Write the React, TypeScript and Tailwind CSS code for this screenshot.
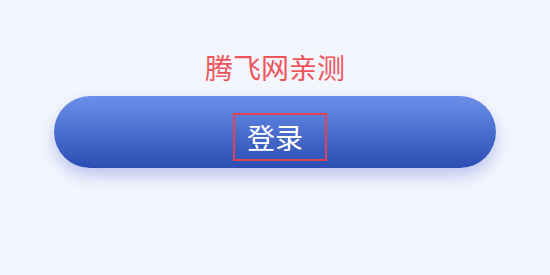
export default function App() {
  return (
    <div
      className="w-[550px] h-[275px] bg-[#f4f6fe] flex flex-col items-center"
      style={{ fontFamily: '"Noto Sans CJK SC", "Noto Sans", sans-serif' }}
    >
      {/* Title */}
      <div className="mt-[48px] h-[38px] flex items-center text-[28px] leading-none text-[#f0555c]">
        腾飞网亲测
      </div>

      {/* Login button */}
      <button className="mt-[10px] w-[442px] h-[72px] rounded-full bg-gradient-to-b from-[#6b8fe9] to-[#2c4db3] shadow-[0_8px_16px_rgba(60,90,200,0.3)] flex items-center justify-center">
        <span className="mt-[9px] ml-[10px] h-[48px] w-[94px] border-2 border-[#e0444e] flex items-center pl-[12px] text-[28px] leading-none text-white">
          登录
        </span>
      </button>
    </div>
  );
}
